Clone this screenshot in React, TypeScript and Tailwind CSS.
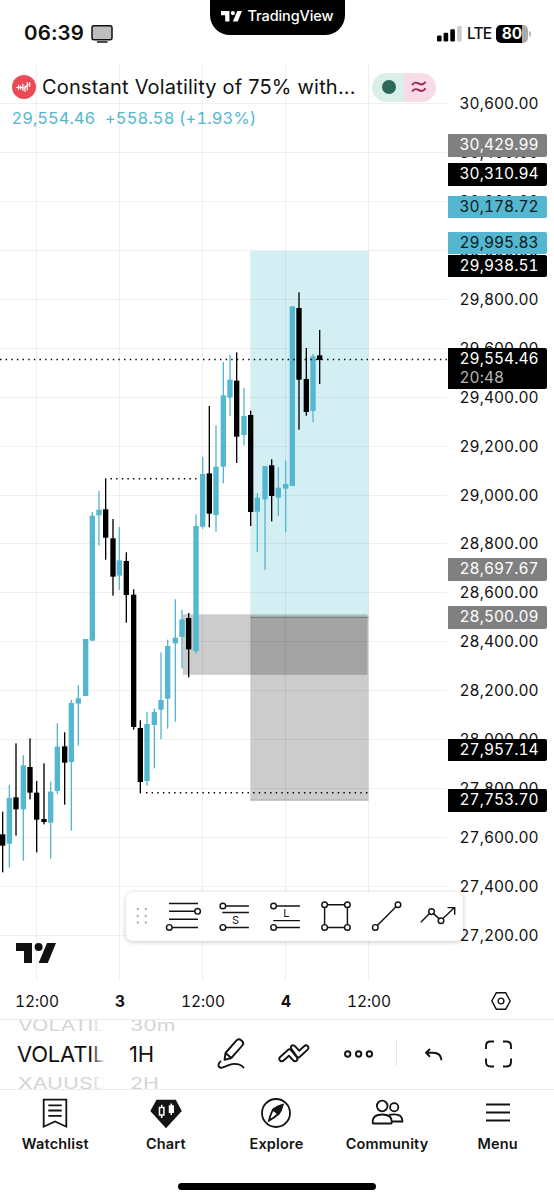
import React from "react";

type Candle = [x: number, high: number, top: number, bottom: number, low: number, up: 0 | 1];

const UP = "#54b7cf";
const DOWN = "#000000";

// Values are in thirds of a pixel, relative to the origin of each session.
const SESSIONS: { x: number; y: number; candles: Candle[] }[] = [
  {
    x: 0,
    y: 470,
    candles: [
      [8, 1025, 1093, 1127, 1207, 0],
      [28, 945, 984, 1121, 1193, 1],
      [48, 820, 982, 1018, 1097, 0],
      [70, 856, 886, 1018, 1172, 1],
      [90, 805, 891, 968, 988, 0],
      [110, 933, 968, 1049, 1147, 0],
      [132, 880, 1047, 1056, 1063, 0],
      [152, 935, 965, 1058, 1166, 1],
      [172, 760, 830, 963, 972, 1],
      [194, 787, 829, 878, 1004, 0],
      [214, 690, 699, 876, 1082, 1],
      [235, 646, 685, 701, 827, 1],
      [257, 507, 507, 678, 678, 1],
      [277, 126, 137, 512, 512, 1],
      [297, 63, 119, 136, 227, 1],
      [317, 25, 118, 203, 269, 0],
      [339, 147, 205, 320, 377, 0],
      [358, 171, 271, 317, 360, 1],
      [379, 247, 273, 375, 458, 0],
      [401, 358, 374, 771, 779, 0],
      [421, 751, 774, 936, 970, 0],
      [441, 726, 762, 933, 947, 1],
      [463, 716, 726, 765, 895, 1],
      [483, 547, 690, 719, 807, 1],
      [503, 509, 528, 686, 776, 1],
      [526, 388, 503, 520, 755, 1],
    ],
  },
  {
    x: 120,
    y: 340,
    candles: [
      [186, 810, 838, 891, 985, 1],
      [206, 819, 834, 928, 1012, 0],
      [228, 523, 558, 934, 941, 1],
      [248, 350, 402, 560, 566, 1],
      [268, 198, 400, 521, 562, 0],
      [288, 256, 380, 525, 575, 1],
      [310, 66, 166, 380, 430, 1],
      [330, 45, 119, 173, 228, 1],
      [350, 37, 122, 290, 369, 0],
      [372, 144, 228, 285, 316, 1],
      [392, 212, 225, 516, 558, 0],
      [412, 459, 473, 515, 636, 1],
      [435, 378, 378, 478, 690, 1],
      [455, 358, 376, 468, 544, 0],
      [475, 382, 443, 473, 528, 1],
      [497, 362, 432, 446, 577, 1],
    ],
  },
  {
    x: 230,
    y: 240,
    candles: [
      [187, 199, 199, 738, 738, 1],
      [207, 157, 204, 419, 569, 0],
      [229, 324, 417, 516, 527, 0],
      [249, 342, 349, 513, 547, 1],
      [269, 270, 346, 360, 432, 0],
    ],
  },
];

const PRICES = [
  "30,600.00", "30,400.00", "30,200.00", "30,000.00", "29,800.00", "29,600.00",
  "29,400.00", "29,200.00", "29,000.00", "28,800.00", "28,600.00", "28,400.00",
  "28,200.00", "28,000.00", "27,800.00", "27,600.00", "27,400.00", "27,200.00",
];

const TAGS = [
  { label: "30,429.99", cls: "top-[70px] bg-[#808080] text-white" },
  { label: "30,310.94", cls: "top-[99.3px] bg-black text-white" },
  { label: "30,178.72", cls: "top-[131.5px] bg-[#54b7cf] text-[#0c1a20]" },
  { label: "29,995.83", cls: "top-[167.8px] bg-[#54b7cf] text-[#0c1a20]" },
  { label: "29,938.51", cls: "top-[190.5px] bg-black text-white" },
  { label: "28,697.67", cls: "top-[494px] bg-[#808080] text-white" },
  { label: "28,500.09", cls: "top-[542px] bg-[#808080] text-white" },
  { label: "27,957.14", cls: "top-[674.7px] bg-black text-white" },
  { label: "27,753.70", cls: "top-[725px] bg-black text-white" },
];

function TvLogo({ className }: { className: string }) {
  return (
    <svg viewBox="0 0 40 20" className={className} fill="currentColor">
      <path d="M0 0h16v20H8V8H0z" />
      <circle cx="22.6" cy="4" r="4" />
      <path d="M31 0h9l-8.2 20h-9.2z" />
    </svg>
  );
}

function StatusBar() {
  return (
    <header className="flex h-16 shrink-0 bg-white">
      <div className="flex w-[209.5px] shrink-0 items-center pt-[3px] pl-[24px]">
        <span className="w-[62px] text-[20.5px] font-semibold tracking-[0.15px] whitespace-nowrap">06:39</span>
        <svg width="22" height="18" viewBox="0 0 22 18" className="ml-[5px]">
          <rect x="1" y=".7" width="20" height="14" rx="2" fill="#bdbdbd" stroke="#111" strokeWidth="1.5" />
          <path d="M6.5 17h9.5" stroke="#111" strokeWidth="1.5" strokeLinecap="round" />
        </svg>
      </div>
      <div className="flex h-[34.5px] w-[135.5px] shrink-0 items-start justify-center gap-[5.5px] rounded-b-[20px] bg-black pt-[7px] text-white">
        <TvLogo className="mt-[4px] h-[10.5px] w-[21px]" />
        <span className="text-[14.5px] leading-[18px] font-medium tracking-[-0.1px]">TradingView</span>
      </div>
      <div className="flex flex-1 items-center justify-end pt-[3px] pr-[23px]">
        <svg width="26" height="17" viewBox="0 0 26 17">
          <rect x="0" y="10.5" width="4.6" height="6" rx="1.2" />
          <rect x="6.6" y="7.7" width="4.6" height="8.8" rx="1.2" />
          <rect x="13.3" y="4.3" width="4.6" height="12.2" rx="1.2" />
          <rect x="20.1" y="1" width="4.6" height="15.5" rx="1.2" fill="#ccc" />
        </svg>
        <span className="ml-[4px] w-[24px] text-[15.5px] font-medium tracking-[-0.8px]">LTE</span>
        <div className="ml-[5px] flex h-[18px] w-[32px] items-center justify-center overflow-hidden rounded-[5px] bg-[linear-gradient(to_right,#000_80%,#aaa_80%)] text-[15.5px] font-bold text-white">
          80
        </div>
        <div className="ml-[1px] h-[6px] w-[2px] rounded-r-full bg-[#bbb]" />
      </div>
    </header>
  );
}

function Candles({ list }: { list: Candle[] }) {
  return list.map(([x, high, top, bottom, low, up]) => (
    <g key={x} fill={up ? UP : DOWN}>
      <rect x={x - 2} y={high} width="4" height={low - high} />
      <rect x={x - 8} y={top} width="16" height={bottom - top} />
    </g>
  ));
}

function ChartCanvas() {
  return (
    <svg width="554" height="955" viewBox="0 64 554 955" className="block">
      <rect x="250.3" y="251" width="118.2" height="366" fill="#d3eff4" />
      <rect x="182.8" y="614.3" width="184.7" height="60.5" fill="#000" fillOpacity=".2" />
      <rect x="250.3" y="617" width="118.2" height="183.5" fill="#000" fillOpacity=".2" />
      <path d="M250.3 617.3H368.5" stroke="#6f7878" />
      <path d="M250.3 800H368.5" stroke="#aaa" />
      <g stroke="#000" strokeOpacity=".06" strokeWidth="1.2">
        {[36.5, 119.5, 202.5, 285.5, 368.5].map((x) => (
          <path key={x} d={`M${x} 64V981`} />
        ))}
        {PRICES.map((p, i) => {
          const y = Math.round(103 + i * 48.94) + 0.5;
          return <path key={p} d={`M0 ${y}H447`} />;
        })}
      </g>
      {SESSIONS.map((s) => (
        <g key={s.x} transform={`translate(${s.x} ${s.y}) scale(.33333)`}>
          <Candles list={s.candles} />
        </g>
      ))}
      <g stroke="#000" strokeWidth="1.4" strokeDasharray="1.41 4.23">
        <path d="M0 359.5H448" />
        <path d="M110.5 478.7H199" />
        <path d="M146 792.8H368" />
      </g>
    </svg>
  );
}

function DrawingToolbar() {
  return (
    <div className="absolute top-[828px] left-[126px] flex h-[49px] w-[337px] items-center rounded-[7px] bg-white shadow-[0_1px_5px_rgba(0,0,0,0.22)]">
      <svg width="337" height="49" viewBox="0 0 337 49" fill="none" stroke="#131313" strokeWidth="1.45">
        <g fill="#b5b5b5" stroke="none">
          {[17, 24, 30.5].map((y) => (
            <g key={y}>
              <circle cx="11.8" cy={y} r="1.2" />
              <circle cx="19.8" cy={y} r="1.2" />
            </g>
          ))}
        </g>
        <path d="M43 11.4h29M43 19.3h26M43 27.3h29M46 35.4h26" />
        <circle cx="71.6" cy="19.3" r="2.8" />
        <circle cx="43.3" cy="35.4" r="2.8" />
        <path d="M99.7 14h23.2M96.3 20.5h26.6M99.7 35.4h23.2" />
        <circle cx="96.9" cy="14" r="2.8" />
        <circle cx="96.9" cy="35.4" r="2.8" />
        <path d="M150.7 14h23.2M147.3 28.6h26.6M150.7 35.4h23.2" />
        <circle cx="147.6" cy="14" r="2.8" />
        <circle cx="147.6" cy="35.4" r="2.8" />
        <path d="M201.4 12.7h17.2M201.4 35.4h17.2M198.6 15.5v17.1M221.4 15.5v17.1" />
        <circle cx="198.6" cy="12.7" r="2.8" />
        <circle cx="221.4" cy="12.7" r="2.8" />
        <circle cx="198.6" cy="35.4" r="2.8" />
        <circle cx="221.4" cy="35.4" r="2.8" />
        <path d="M251.3 33.4 270 14.7" />
        <circle cx="249.3" cy="35.4" r="2.8" />
        <circle cx="272" cy="12.7" r="2.8" />
        <path d="m294.8 30.3 8.7-8.7M307.6 21.6l5.3 5M317 26.6l11.5-11M321.5 15.6h7.2v7.2" />
        <circle cx="305.5" cy="19.6" r="2.8" />
        <circle cx="315" cy="28.7" r="2.8" />
        <g fill="#131313" stroke="none" className="font-['Inter'] text-[11px]">
          <text x="106" y="32.3">S</text>
          <text x="157.3" y="25.3">L</text>
        </g>
      </svg>
    </div>
  );
}

function Chart() {
  return (
    <section className="relative h-[955px] shrink-0">
      <ChartCanvas />

      <div className="absolute top-[8.5px] left-[12px] flex h-[29px] items-center">
        <svg width="24" height="24" viewBox="0 0 24 24">
          <circle cx="12" cy="12" r="12" fill="#ea4a54" />
          <path
            d="M4.5 12.5h1M6.5 10v4.5M8.600 11v3M10.800 9v6.500M13 11v5.500M15.300 7.500v7.500M17.700 7.500v4M6.500 12.500l2-.5 2.300 1 2.200 0 2.300-3 2.400-1"
            fill="none" stroke="#fff" strokeWidth="1.2" strokeLinecap="round"
          />
        </svg>
        <h1 className="ml-[6px] w-[315px] text-[20px] leading-[27px] tracking-[0.2px] whitespace-nowrap">
          Constant Volatility of 75% with...
        </h1>
        <div className="ml-[15px] flex h-[29px] w-[64px] overflow-hidden rounded-full">
          <div className="flex w-1/2 items-center justify-center bg-[#daeeea] pl-[2px]">
            <span className="size-[13.5px] rounded-full bg-[#2b6a5b]" />
          </div>
          <div className="flex w-1/2 items-center justify-center bg-[#f7dbe6] pr-[3px]">
            <svg width="16" height="12" viewBox="0 0 16 12" fill="none" stroke="#a0215a" strokeWidth="1.9">
              <path d="M1.2 4.2c1.5-3.5 4.5-2.8 6.8-1.5s4.8.7 6.6-1.9M1.2 10.7c1.5-3.5 4.5-2.8 6.8-1.5s4.8.7 6.6-1.9" />
            </svg>
          </div>
        </div>
      </div>
      <p className="absolute top-[43px] left-[11.5px] flex gap-[9px] text-[16.5px] leading-[22px] whitespace-nowrap text-[#54b7cf] tabular-nums">
        <span className="w-[84.5px]">29,554.46</span>
        <span className="tracking-[0.12px]">+558.58 (+1.93%)</span>
      </p>

      <div className="absolute top-[15px] left-[459.5px] flex flex-col text-[15.5px] tracking-[0.05px] tabular-nums">
        {PRICES.map((p) => (
          <span key={p} className="h-[48.94px] leading-[49px]">{p}</span>
        ))}
      </div>
      {TAGS.map((t) => (
        <div
          key={t.label}
          className={`absolute left-[448px] h-[22.5px] w-[99px] rounded-r-[2px] pl-[11.5px] text-[15.5px] leading-[22px] tracking-[0.05px] tabular-nums ${t.cls}`}
        >
          {t.label}
        </div>
      ))}
      <div className="absolute top-[284.3px] left-[448px] flex h-[41px] w-[99px] flex-col rounded-r-[2px] bg-black pt-[1px] pl-[11.5px] text-[15.5px] leading-[19px] tracking-[0.05px] text-white tabular-nums">
        <span>29,554.46</span>
        <span className="text-[#b5b5b5]">20:48</span>
      </div>

      <DrawingToolbar />
      <TvLogo className="absolute top-[879px] left-[16px] h-[20px] w-[40px] text-[#111]" />

      <div className="absolute top-[927px] left-[-4.5px] flex text-center text-[15.5px] leading-[22px] tracking-[-0.1px] tabular-nums">
        <span className="w-[83px]">12:00</span>
        <span className="w-[83px] font-bold">3</span>
        <span className="w-[83px]">12:00</span>
        <span className="w-[83px] font-bold">4</span>
        <span className="w-[83px]">12:00</span>
      </div>
      <svg width="20" height="18" viewBox="0 0 20 18" className="absolute top-[928px] left-[491px]" fill="none" stroke="#111" strokeWidth="1.4">
        <path d="M5.3.8h9.4L19.2 9l-4.5 8.2H5.3L.8 9z" />
        <circle cx="10" cy="9" r="2.9" />
      </svg>
    </section>
  );
}

function Wheel({ items, className }: { items: [string, string, string]; className: string }) {
  return (
    <div className={`relative flex h-full flex-col justify-center overflow-hidden whitespace-nowrap ${className}`}>
      <span className="absolute top-[-6px] left-[1px] origin-center scale-y-[.72] text-[21.5px] leading-[22px] text-[#d4d4d4]">{items[0]}</span>
      <span className="text-[22px] tracking-[-0.2px]">{items[1]}</span>
      <span className="absolute top-[52px] left-[1px] origin-center scale-y-[.72] text-[21.5px] leading-[22px] text-[#d4d4d4]">{items[2]}</span>
    </div>
  );
}

function ActionBar() {
  return (
    <section className="flex h-[71px] shrink-0 border-y border-[#ececec] bg-white">
      <div className="relative ml-[17px] w-[88px]">
        <Wheel items={["VOLATIL", "VOLATIL", "XAUUSD"]} className="w-[88px]" />
        <div className="absolute inset-y-0 right-0 w-[14px] bg-linear-to-r from-transparent to-white" />
      </div>
      <Wheel items={["30m", "1H", "2H"]} className="ml-[24px] w-[60px]" />
      <svg width="365" height="69" viewBox="189 1020 365 69" fill="none" stroke="#131313" strokeWidth="1.9" strokeLinecap="round" strokeLinejoin="round">
        <path d="m225.5 1053 10.8-12.3c1.5-1.7 3.2-1.8 4.8-.5l.9.8c1.5 1.3 1.6 3 .3 4.5l-11 12.5-6.8 1.8zM225.5 1053l5.800 5" />
        <path d="M220.500 1061.500c-2.500 1.500-3.200 6.500 1 6.200 4-.4 7.500-3.700 12.500-3.800 4.500 0 7.500 1 9.500 3.600" />
        <path d="M280.500 1060.900c-1.500-1.200-1.800-2.500-.6-3.600l8-7.300c1-.9 2-.9 2.900 0l5.600 6.600c2.600 3.200-.7 6.300-3.600 3.400l-3.900-4.300-5 4.600c-1.200 1.100-2.300 1.300-3.400.6z" />
        <path d="M291.700 1049.400c-2.300-3 .9-5.700 3.500-3l3.900 4.300 5-4.500c2.600-2.200 6 .8 3.500 3.400l-7.700 7.200c-1 .9-2 .9-2.900 0z" />
        <circle cx="347.7" cy="1054" r="2.7" />
        <circle cx="358.6" cy="1054" r="2.7" />
        <circle cx="369.4" cy="1054" r="2.7" />
        <path d="M396.5 1041.5v24" stroke="#e5e5e5" strokeWidth="1" />
        <path d="m430 1049-4 3.800 4 3.900M427 1052.800h6c6 0 8.200 3 8.500 7.500" strokeLinecap="butt" />
        <path d="M486 1049v-3c0-3 1.500-4.500 4.500-4.500h3.500M503 1041.500h3.500c3 0 4.500 1.500 4.500 4.500v3M511 1058.500v3.500c0 3-1.500 4.500-4.500 4.500H503M494 1066.500h-3.500c-3 0-4.500-1.500-4.500-4.500v-3.500" strokeLinecap="butt" />
      </svg>
    </section>
  );
}

const TABS: { label: string; icon: React.ReactNode }[] = [
  {
    label: "Watchlist",
    icon: <path d="M4.7 2.7h22.6v27L16 24.5 4.7 29.7zM9.3 8.3h13.4M9.3 13.5h13.4M9.3 18.8h13.4" />,
  },
  {
    label: "Chart",
    icon: (
      <>
        <path d="M6.5 2.7h19.3l6 11.3L16 31.2.3 14z" fill="#131313" stroke="none" />
        <g stroke="#fff" strokeWidth="1.5">
          <path d="M9.5 10.5h4.4v7.5H9.5zM11.7 7.8v2.7M11.7 18v3" />
          <path d="M19.5 9h3.7v6.3h-3.7z" fill="#fff" />
          <path d="M21.3 6.5v11.5" />
        </g>
      </>
    ),
  },
  {
    label: "Explore",
    icon: (
      <>
        <circle cx="16" cy="16" r="14" />
        <path d="M13.5 12.2c2.7-2.2 5.500-3.400 9-4.200-.9 3.600-2 6.300-4.300 9-2.500 2.500-5.700 4.800-9.300 6.600 1-3.900 2.200-8 4.600-11.400z" />
        <path d="M22.500 8 13 12.700l5.500 4.600c2.300-2.800 3.300-5.500 4-9.300z" fill="#131313" />
      </>
    ),
  },
  {
    label: "Community",
    icon: (
      <>
        <circle cx="11.2" cy="9" r="5.3" />
        <circle cx="23.2" cy="10.3" r="4.1" />
        <path d="M1.7 26v-1.5c0-4.5 2.5-7 9.500-7s9.500 2.500 9.500 7V26q0 .5-.5.500h-18q-.5 0-.5-.5zM18 17.800c8-1 13.400-.2 13.400 6.700H21" />
      </>
    ),
  },
  { label: "Menu", icon: <path d="M4 7.5h24M4 15.5h24M4 23.5h24" /> },
];

function TabBar() {
  return (
    <nav className="flex h-[110px] shrink-0 flex-col items-center bg-white">
      <ul className="flex w-full pt-[7px]">
        {TABS.map((t) => (
          <li key={t.label} className="flex w-[110.6px] flex-col items-center">
            <svg width="32" height="32" viewBox="0 0 32 32" fill="none" stroke="#131313" strokeWidth="1.8" className="overflow-visible">
              {t.icon}
            </svg>
            <span className="mt-[5px] text-[14.5px] leading-[20px] font-semibold tracking-[0.18px] text-[#131313]">{t.label}</span>
          </li>
        ))}
      </ul>
      <div className="mt-[29px] h-[7px] w-[198px] rounded-full bg-black" />
    </nav>
  );
}

export default function App() {
  return (
    <main className="flex h-[1200px] w-[554px] flex-col overflow-hidden bg-white font-['Inter',sans-serif] text-[#111]">
      <StatusBar />
      <Chart />
      <ActionBar />
      <TabBar />
    </main>
  );
}
